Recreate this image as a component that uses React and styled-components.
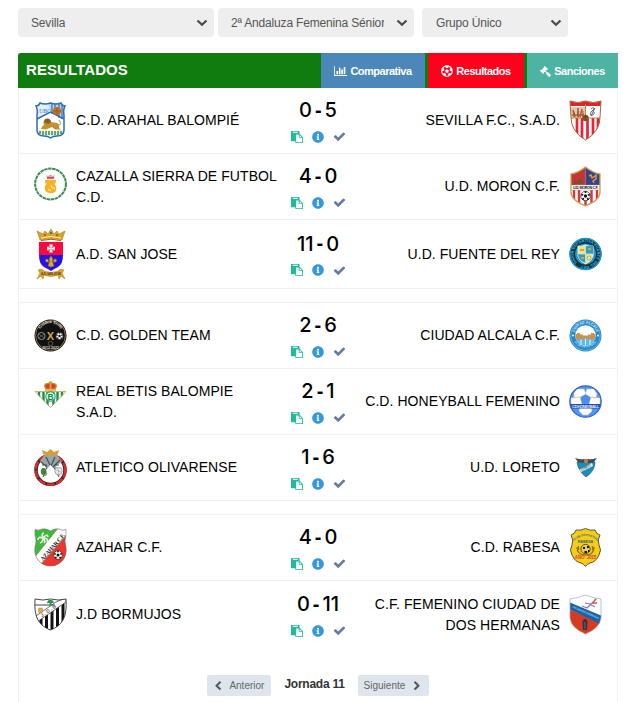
import styled, { createGlobalStyle, css } from "styled-components";
import { FaFutbol, FaGavel, FaInfoCircle } from "react-icons/fa";

const Ball = ({ x, y, r }) => (
  <g>
    <circle cx={x} cy={y} r={r} fill="#fff" stroke="#222" strokeWidth="0.7" />
    <circle cx={x} cy={y} r={r * 0.35} fill="#111" />
    <path
      d={`M${x - r * 0.9} ${y - r * 0.3}l${r * 0.4} ${r * 0.1}M${x + r * 0.9} ${y - r * 0.3}l${-r * 0.4} ${r * 0.1}M${x - r * 0.6} ${y + r * 0.8}l${r * 0.2} ${-r * 0.4}M${x + r * 0.6} ${y + r * 0.8}l${-r * 0.2} ${-r * 0.4}M${x} ${y - r}v${r * 0.35}`}
      stroke="#111"
      strokeWidth={r * 0.35}
    />
  </g>
);

const Arahal = () => (
  <svg width="31" height="37" viewBox="0 0 31 37">
    <clipPath id="arahal">
      <path d="M1 4Q4 4 5 1Q10 3 15.500 1Q21 3 26 1Q27 4 30 4Q28 8 29 13V28Q29 34 22 34Q18 34 15.500 36Q13 34 9 34Q2 34 2 28V13Q3 8 1 4Z" />
    </clipPath>
    <g clipPath="url(#arahal)">
      <rect width="31" height="37" fill="#fff" />
      <path d="M1 0H15V10L1 18Z" fill="#e3eefa" />
      <path d="M13 0H31V18L15 10Z" fill="#b9d3ec" />
      <path d="M17 0v12M20 0v13M27 0v17M24 0v16" stroke="#3b77b8" strokeWidth="1.300" />
      <path d="M2 17L15.500 10L29 17" fill="none" stroke="#2e6db0" strokeWidth="1.500" />
      <circle cx="22" cy="9" r="4" fill="#c8701e" />
      <path d="M18 9h8M22 5v8" stroke="#8f4a12" strokeWidth="0.500" />
      <text x="4" y="11" fontSize="6" fontStyle="italic" fontFamily="Liberation Serif" fill="#3b77b8">UBC</text>
      <path d="M6 27Q7 24 9 23Q7 19 11 17Q15 16 16 20L22 21Q25 22 24 26L26 27.500H20L17 25L11 27.500Z" fill="#c19234" />
      <path d="M10 17Q15 15 16 20L13 22L9 20Z" fill="#84621f" />
      <path d="M24 23Q27 22 24 18" fill="none" stroke="#c19234" />
      <rect y="28" width="31" height="7" fill="#e9f3e9" />
      <path d="M5 29v3M8 29v4M11 29v4M14 29v4M17 29v4M20 29v4M23 29v4M26 29v3" stroke="#3e8c46" strokeWidth="1.500" />
    </g>
    <path d="M1 4Q4 4 5 1Q10 3 15.500 1Q21 3 26 1Q27 4 30 4Q28 8 29 13V28Q29 34 22 34Q18 34 15.500 36Q13 34 9 34Q2 34 2 28V13Q3 8 1 4Z" fill="none" stroke="#2e6db0" strokeWidth="1.500" />
  </svg>
);

const Cazalla = () => (
  <svg width="33" height="34" viewBox="0 0 33 34">
    <circle cx="16.500" cy="17" r="15.400" fill="#fff" stroke="#3f8a4d" strokeWidth="2" strokeDasharray="3.500 0.600" />
    <circle cx="16.500" cy="17" r="13.500" fill="none" stroke="#dcebdc" strokeWidth="0.500" />
    <path d="M12 8L14 9L16.500 7.500L19 9L21 8L20 11H13Z" fill="#e9a49c" />
    <path d="M13 11H20" stroke="#c2304b" strokeWidth="1.500" />
    <path d="M11.500 13H21.500Q23 15 20.500 17Q23 20 22 24Q19 27 16 26Q12 26 11 23Q10 19 12.500 17Q10 15 11.500 13Z" fill="#f7b125" />
    <path d="M17 18l1 3h3M14 23h3" fill="none" stroke="#fff0bb" />
  </svg>
);

const SanJose = () => (
  <svg width="30" height="52" viewBox="0 0 30 52">
    <path d="M4 12L1 3L7 6L9 3L12 6L15 1L18 6L21 3L23 6L29 3L26 12Q15 9 4 12Z" fill="#d9a520" stroke="#937016" strokeWidth="0.500" />
    <path d="M5 10Q15 7 25 10" fill="none" stroke="#fff3b1" />
    <path d="M5 12.500Q15 10 25 12.500" fill="none" stroke="#ba5030" />
    <circle cx="9" cy="7" r="0.900" fill="#cf2b26" />
    <circle cx="15" cy="5" r="1" fill="#2c60b8" />
    <circle cx="21" cy="7" r="0.900" fill="#cf2b26" />
    <path d="M3 14H27V27H3Z" fill="#fb0b3d" />
    <path d="M3 27H27Q27 36 22 39Q18 41 15 43Q12 41 8 39Q3 36 3 27Z" fill="#2512e4" />
    <path d="M15 20.500L13 16.500H17ZM15 20.500L17 24.500H13ZM15 20.500L11 22.500V18.500ZM15 20.500L19 18.500V22.500Z" fill="#fff" />
    <path d="M12.500 18l5 5M17.500 18l-5 5" stroke="#fff" strokeWidth="0.700" />
    <path d="M15 28Q18 31 16 34H20Q22 31 18 31L17 35L18 38L15 39L12 38L13 35L12 31Q8 31 10 34H14Q12 31 15 28Z" fill="#d8ac31" stroke="#8c621c" strokeWidth="0.500" />
    <path d="M2 42Q6 40 8 43Q15 46 22 43Q24 40 28 42L26 45L29 51L25 48L23 51L22 47Q15 50 8 47L7 51L5 48L1 51L4 45Z" fill="#dda12b" stroke="#ad7513" strokeWidth="0.500" />
    <text x="15" y="47" textAnchor="middle" fontSize="3" textLength="20" fontWeight="bold" fontFamily="Liberation Sans" fill="#5b4417">A.D. SAN JOSE</text>
  </svg>
);

const Golden = () => (
  <svg width="33" height="33" viewBox="0 0 33 33">
    <circle cx="16.500" cy="16.500" r="16" fill="#111" />
    <circle cx="16.500" cy="16.500" r="14.900" fill="none" stroke="#a47c43" strokeWidth="0.900" />
    <path id="goldenTop" d="M6 10A12.300 12.300 0 0 1 27 10" fill="none" />
    <text fontSize="4.300" fontWeight="bold" fontFamily="Liberation Serif" fill="#eee"><textPath href="#goldenTop" startOffset="50%" textAnchor="middle">Golden Team</textPath></text>
    <text x="16.500" y="20.500" textAnchor="middle" fontSize="11" fontWeight="bold" fontFamily="Liberation Sans" fill="#d3a15e">X</text>
    <circle cx="7.500" cy="17" r="3.600" fill="none" stroke="#a9a9a9" strokeWidth="0.800" />
    <path d="M5 15l5 4M10 15l-5 4" stroke="#888" strokeWidth="0.600" />
    <Ball x={25.500} y={17} r={3.600} />
    <circle cx="16.500" cy="24.500" r="2.200" fill="none" stroke="#84714e" strokeWidth="0.700" />
    <text x="16.500" y="30" textAnchor="middle" fontSize="3.500" fontWeight="bold" fontFamily="Liberation Sans" fill="#ddd">2012-2021</text>
  </svg>
);

const Betis = () => (
  <svg width="33" height="41" viewBox="0 0 33 41">
    <path d="M12 8Q9 4 12.500 2.500Q15 3 16.500 0.500Q18 3 20.500 2.500Q24 4 21 8Z" fill="#dc3e32" stroke="#c99a30" strokeWidth="1.200" />
    <path d="M16.500 0V8M11 9H22" stroke="#d9aa31" strokeWidth="1.700" />
    <clipPath id="betis"><path d="M1 11H32L16.500 27Z" /></clipPath>
    <g clipPath="url(#betis)">
      <path d="M0 10H33V28H0Z" fill="#fff" />
      <path d="M5 10v18M9.500 10v18M13.500 10v18M19.500 10v18M23.500 10v18M28 10v18" stroke="#109150" strokeWidth="2.400" />
    </g>
    <path d="M1 10.500H32L16.500 26.500Z" fill="none" stroke="#c6ad4d" strokeWidth="0.900" />
    <circle cx="16.500" cy="15.500" r="4.700" fill="#e9f7ef" stroke="#109150" />
    <text x="16.500" y="18.500" textAnchor="middle" fontSize="8.500" fontWeight="bold" fontFamily="Liberation Sans" fill="#109150">B</text>
  </svg>
);

const Olivarense = () => (
  <svg width="33" height="37" viewBox="0 0 33 37">
    <circle cx="16.500" cy="21" r="14.500" fill="#fff" stroke="#2f2528" strokeWidth="3.500" />
    <circle cx="16.500" cy="21" r="14.900" fill="none" stroke="#d92d2b" strokeWidth="2.600" strokeDasharray="8 1.500" />
    <path d="M6 12L12 4H22L28 13L22 17L26 27L22 25L17 18L12 27L10 27L12 17Z" fill="#9ba4a5" />
    <path d="M7 13l6 5M26 11l-8 8M12 8l4 8M21 8l-4 9M8 16l5 0M25 16h-5" stroke="#3c5354" strokeWidth="1.200" />
    <path d="M13 19L9 28M20 19L25 28" stroke="#444" />
    <path d="M12 21L16.500 16L22 22L18 28L16 32Z" fill="#fff" />
    <path d="M9 5L8 1L13 3L16.500 0L20 3L25 1L24 5Q17 8 9 5Z" fill="#d99d35" />
    <ellipse cx="9.500" cy="22.500" rx="2.700" ry="3.500" fill="#41833b" />
    <circle cx="24.500" cy="22" r="3.700" fill="#eee" stroke="#888" strokeWidth="0.700" />
    <path d="M22 21l5 2M24 19l1 6" stroke="#888" strokeWidth="0.500" />
  </svg>
);

const Azahar = () => (
  <svg width="33" height="39" viewBox="0 0 33 39">
    <clipPath id="azahar"><path d="M1 1.500Q5 3 8 1Q12 0 16.500 3Q21 0 25 1Q28 3 32 1.500V7Q30 13 32 19Q33 27 29 32Q24 38 16.500 38Q9 38 4 32Q0 27 1 19Q3 13 1 7Z" /></clipPath>
    <g clipPath="url(#azahar)">
      <rect width="33" height="39" fill="#3eb939" />
      <path d="M33 7V39H8L5 36Z" fill="#ee342d" />
      <path d="M0 30L25 -1L36 3L7 36Z" fill="#fff" stroke="#8a7963" strokeWidth="0.700" />
      <text x="-17" y="2.200" textAnchor="start" transform="translate(18.500 19) rotate(-49)" textLength="34" fontSize="6" fontWeight="bold" fontFamily="Liberation Serif" fill="#222">AZAHAR C.F.</text>
      <path d="M9 10Q7 5 10 5M9 10Q13 5 14 9M9 10Q15 10 13 14M9 10Q4 8 4 12M9 10Q9 14 6 15M9 10Q12 13 10 15" fill="none" stroke="#e6f0df" strokeWidth="1.700" />
      <Ball x={24} y={27} r={4.300} />
    </g>
    <path d="M1 1.500Q5 3 8 1Q12 0 16.500 3Q21 0 25 1Q28 3 32 1.500V7Q30 13 32 19Q33 27 29 32Q24 38 16.500 38Q9 38 4 32Q0 27 1 19Q3 13 1 7Z" fill="none" stroke="#777" strokeWidth="0.600" />
  </svg>
);

const Bormujos = () => (
  <svg width="33" height="33" viewBox="0 0 33 33">
    <clipPath id="bormujos"><path d="M1 1Q9 3 16.500 1Q24 3 32 1Q33 15 29 22Q25 29 16.500 32Q8 29 4 22Q0 15 1 1Z" /></clipPath>
    <g clipPath="url(#bormujos)">
      <rect width="33" height="33" fill="#fff" />
      <path d="M7 20v12M12.500 17v16M18 12v21M23.500 8v25M29 5v28" stroke="#111" strokeWidth="3" />
      <path d="M3 24L32 4V0L22 4L2 18Z" fill="#fff" stroke="#333" strokeWidth="0.700" />
      <path d="M0 7H21" stroke="#444" />
      <text x="0" y="0" transform="translate(8 19.500) rotate(-35)" fontSize="5" fontWeight="bold" fontFamily="Liberation Sans" textLength="18" fill="#666">J.D.B</text>
      <rect x="4.500" y="10" width="4" height="4.500" rx="1" fill="#dfac4a" stroke="#987434" strokeWidth="0.500" />
      <path d="M13 5Q14 1 17 2Q20 2 19.500 5H17.500V8H15.500V5Z" fill="#2d954d" />
    </g>
    <path d="M1 1Q9 3 16.500 1Q24 3 32 1Q33 15 29 22Q25 29 16.500 32Q8 29 4 22Q0 15 1 1Z" fill="none" stroke="#333" strokeWidth="0.900" />
  </svg>
);

const Sevilla = () => (
  <svg width="33" height="41" viewBox="0 0 33 41">
    <clipPath id="sevilla"><path d="M1 1Q9 4 16.500 1Q24 4 32 1L31 17Q31 24 28 29Q24 36 16.500 40Q9 36 5 29Q2 24 2 17Z" /></clipPath>
    <g clipPath="url(#sevilla)">
      <rect width="33" height="41" fill="#fff" />
      <path d="M0 0H33V6H0Z" fill="#e3232b" />
      <path d="M2 7H16V18H2Z" fill="#e7c8a5" />
      <path d="M4 10l2 7M9 8v9M13 9l-2 8M3 15h12" stroke="#b7564a" strokeWidth="1.600" />
      <path d="M5 12v5M9 11v6M14 11v6" stroke="#805f27" />
      <path d="M8 18V41M13 18V41M18.500 18V41M24 18V41M29 18V41" stroke="#ed2036" strokeWidth="2.700" />
      <path d="M1 18H32M16.500 4V18" stroke="#b18544" />
      <path d="M22 9Q25 6 25 9L22 12Q20 16 24 15Q27 13 24 11M26 8L22 16" fill="none" stroke="#444" strokeWidth="0.800" />
    </g>
    <circle cx="16.500" cy="18" r="3.200" fill="#8e5428" />
    <path d="M14 17h5M16.500 15v6" stroke="#4f351e" strokeWidth="0.500" />
    <path d="M1 1Q9 4 16.500 1Q24 4 32 1L31 17Q31 24 28 29Q24 36 16.500 40Q9 36 5 29Q2 24 2 17Z" fill="none" stroke="#9a7037" />
  </svg>
);

const Moron = () => (
  <svg width="31" height="41" viewBox="0 0 31 41">
    <clipPath id="moron"><path d="M1 8Q8 7 15.500 1Q23 7 30 8V25Q31 34 15.500 40Q0 34 1 25Z" /></clipPath>
    <g clipPath="url(#moron)">
      <path d="M0 0H15.500V19H0Z" fill="#c53633" />
      <path d="M15.500 0H31V19H15.500Z" fill="#34418c" />
      <path d="M0 19H31V41H0Z" fill="#fff" />
      <path d="M4 24V40M9 24V40M21.500 24V40M27 24V40M15.500 32V40" stroke="#d9393c" strokeWidth="2.500" />
      <path d="M4 18V14L7 16L9 13L13 15V18Z" fill="#804d31" />
      <path d="M19 10L21 9L22 12L24 11L26 9V13L23 15L24 17" fill="none" stroke="#df973b" strokeWidth="1.500" />
      <rect x="1" y="19" width="29" height="5" fill="#fff" stroke="#9b9286" strokeWidth="0.400" />
    </g>
    <text x="15.500" y="23" textAnchor="middle" fontSize="3.700" textLength="25" fontWeight="bold" fontFamily="Liberation Sans" fill="#111">U.D. MORON C.F.</text>
    <Ball x={15.500} y={30} r={4.700} />
    <path d="M1 8Q8 7 15.500 1Q23 7 30 8V25Q31 34 15.500 40Q0 34 1 25Z" fill="none" stroke="#cba35b" strokeWidth="1.300" />
  </svg>
);

const Fuente = () => (
  <svg width="33" height="34" viewBox="0 0 33 34">
    <circle cx="16.500" cy="17" r="16" fill="#12303f" />
    <circle cx="16.500" cy="17" r="15.500" fill="none" stroke="#1c9ac7" strokeWidth="1.300" />
    <circle cx="16.500" cy="17" r="10.500" fill="#2399c7" />
    <path id="fuenteRing" d="M8 25.500A12 12 0 1 1 25 25.500A12 12 0 0 1 8 25.500" fill="none" />
    <text fontSize="3.700" fontWeight="bold" fontFamily="Liberation Sans" fill="#3cc3ee"><textPath href="#fuenteRing" textLength="70">UNION DEPORTIVA FUENTE DEL REY</textPath></text>
    <path d="M9 9Q13 10 16.500 8Q20 10 24 9V19Q23 24 16.500 27Q10 24 9 19Z" fill="#f3e184" stroke="#e5efed" />
    <path d="M16.500 9H24V17H16.500ZM9 17H16.500V26Q10 24 9 18Z" fill="#309dc7" />
    <path d="M11 13h4M19 12h3M12 21h3" stroke="#d9a044" strokeWidth="2" />
    <circle cx="20" cy="21" r="2" fill="#eaf0a0" stroke="#776" strokeWidth="0.500" />
    <path d="M9 17H24M16.500 9V26" stroke="#dce5cd" strokeWidth="0.700" />
  </svg>
);

const Alcala = () => (
  <svg width="33" height="33" viewBox="0 0 33 33">
    <circle cx="16.500" cy="16.500" r="16" fill="#2689cb" />
    <circle cx="16.500" cy="16.500" r="14.900" fill="none" stroke="#8bc8ed" strokeWidth="0.600" />
    <path id="alcalaTop" d="M5.200 16A11.300 11.300 0 0 1 27.800 16" fill="none" />
    <path id="alcalaLow" d="M3.300 18A13.500 13.500 0 0 0 29.700 18" fill="none" />
    <text fontSize="3.600" fontWeight="bold" fontFamily="Liberation Sans" fill="#d8effc"><textPath href="#alcalaTop" startOffset="50%" textAnchor="middle">CIUDAD ALCALA</textPath></text>
    <text fontSize="3" fontWeight="bold" fontFamily="Liberation Sans" fill="#b8dff7"><textPath href="#alcalaLow" startOffset="50%" textAnchor="middle">CLUB DE FUTBOL</textPath></text>
    <circle cx="16.500" cy="16.500" r="10.300" fill="#fff" />
    <path d="M7 19H26Q24 26.500 16.500 26.500Q9 26.500 7 19Z" fill="#5cbbed" />
    <path d="M12 20v6M16.500 20v6.500M21 20v6" stroke="#eaf8ff" />
    <path d="M6.500 20.500V15H8V14H11V15.500H14V16.500H19V15.500H22V14H25V15H26.500V20.500H19Q16.500 18 14 20.500Z" fill="#c69450" />
    <circle cx="4" cy="16.500" r="1" fill="#fff" />
    <circle cx="29" cy="16.500" r="1" fill="#fff" />
  </svg>
);

const Honeyball = () => (
  <svg width="33" height="33" viewBox="0 0 33 33">
    <clipPath id="honey"><circle cx="16.500" cy="16.500" r="15.500" /></clipPath>
    <g clipPath="url(#honey)">
      <rect width="33" height="33" fill="#4b97f4" />
      <path d="M8 4L15 4L17 9L12 12L5 13L5 8ZM18 4L25 4L28 9L27 13L21 12L16 9ZM2 13L11 12L13 19L8 22L2 20ZM31 13L22 12L20 19L25 22L31 20ZM11 22H22L23 26L19 30H14L10 26Z" fill="#fff" stroke="#d7c7a0" strokeWidth="0.600" />
      <path d="M12 12L16.500 9.500L21 12L20 18H13Z" fill="#4a8fe8" />
      <path d="M1 19H32V23.500H1Z" fill="#294eb0" />
    </g>
    <circle cx="16.500" cy="16.500" r="15.700" fill="none" stroke="#2d5fc9" strokeWidth="1.200" />
    <text x="16.500" y="22.700" textAnchor="middle" fontSize="4.300" textLength="27" fontWeight="bold" fontFamily="Liberation Sans" fill="#d9e8ff">CD.HONEYBALL</text>
  </svg>
);

const Loreto = () => (
  <svg width="22" height="19" viewBox="0 0 22 19">
    <path d="M2 4H20Q20 13 11 19Q3 13 2 4Z" fill="#168fb9" stroke="#315664" strokeWidth="0.700" />
    <path d="M0 0Q6 2 9 1H13Q16 2 22 0L19 4L13 5H9L3 4Z" fill="#414955" />
    <circle cx="11" cy="3" r="2.200" fill="#ba8344" />
    <path d="M4 12L17 5L18 8L6 14Z" fill="#edf4f5" />
    <text x="0" y="0" transform="translate(6.500 13) rotate(-28)" fontSize="3" textLength="11" fontWeight="bold" fontFamily="Liberation Sans" fill="#556">LORETO</text>
  </svg>
);

const Rabesa = () => (
  <svg width="31" height="39" viewBox="0 0 31 39">
    <path d="M6 2Q11 3 15.500 0.500Q20 3 25 2Q26 6 30 7Q27 12 29 17Q32 22 29 27Q26 34 20 35Q17 36 15.500 38.500Q14 36 11 35Q5 34 2 27Q-1 22 2 17Q4 12 1 7Q5 6 6 2Z" fill="#f7cb16" stroke="#5c573c" />
    <path id="rabesaTop" d="M3.500 13Q15.500 3 27.500 13" fill="none" />
    <text fontSize="3" fontWeight="bold" fontFamily="Liberation Sans" fill="#2b6c79"><textPath href="#rabesaTop" startOffset="50%" textAnchor="middle">CLUB DEPORTIVO</textPath></text>
    <text x="15.500" y="15" textAnchor="middle" fontSize="3.700" fontWeight="bold" fontFamily="Liberation Sans" fill="#2b6c79">RABESA</text>
    <path d="M7 19Q7 27 15.500 27Q24 27 24 19M8.500 18v4M22.500 18v4" fill="none" stroke="#8e761a" strokeWidth="1.300" />
    <circle cx="15.500" cy="21" r="4.600" fill="#f0cf45" stroke="#222" strokeWidth="0.700" />
    <path d="M13 19h2v2h-2zM17 18h2v2h-2zM14.500 23h2.500v2h-2.500zM18 22h1.500v2H18z" fill="#111" />
    <text x="9.500" y="30.500" textAnchor="middle" fontSize="4.500" fontWeight="bold" fontStyle="italic" fontFamily="Liberation Sans" fill="#cf4632">AÑO</text>
    <text x="21.500" y="30.500" textAnchor="middle" fontSize="4.500" fontWeight="bold" fontStyle="italic" textLength="9" fontFamily="Liberation Sans" fill="#cf4632">2015</text>
  </svg>
);

const DosHermanas = () => (
  <svg width="33" height="41" viewBox="0 0 33 41">
    <clipPath id="hermanas"><path d="M1 5Q9 4 16.500 1Q24 4 32 5V24Q31 34 16.500 40Q2 34 1 24Z" /></clipPath>
    <g clipPath="url(#hermanas)">
      <rect width="33" height="41" fill="#fff" />
      <path d="M0 15L33 30V41H0Z" fill="#d83a1e" />
      <path d="M0 8L33 22V31L0 15Z" fill="#1763a6" />
      <text x="0" y="0" transform="translate(3 13.500) rotate(24)" fontSize="2.800" textLength="29" fontFamily="Liberation Sans" fill="#b3d4ee">C.F.F CIUDAD DOS HERMANAS</text>
      <path d="M25 7L22 10L16 9M22 10L18 14L13 12M22 11L26 13" fill="none" stroke="#8b7cc0" strokeWidth="1.200" />
      <path d="M26 6L24 9L28 9" fill="none" stroke="#e34c46" strokeWidth="1.300" />
      <circle cx="26.500" cy="5.500" r="1.100" fill="#e34c46" />
      <path d="M13.500 27Q16 23 18.500 27L18 36H14Z" fill="#2b3352" />
      <path d="M16 28v7" stroke="#6d6680" />
    </g>
    <path d="M1 5Q9 4 16.500 1Q24 4 32 5V24Q31 34 16.500 40Q2 34 1 24Z" fill="none" stroke="#9faab1" strokeWidth="0.700" />
  </svg>
);

const matches = [
  [
    { home: "C.D. ARAHAL BALOMPIÉ", HomeCrest: Arahal, score: [0, 5], away: "SEVILLA F.C., S.A.D.", AwayCrest: Sevilla },
    { home: "CAZALLA SIERRA DE FUTBOL\nC.D.", HomeCrest: Cazalla, lift: 6, score: [4, 0], away: "U.D. MORON C.F.", AwayCrest: Moron },
    { home: "A.D. SAN JOSE", HomeCrest: SanJose, score: [11, 0], away: "U.D. FUENTE DEL REY", AwayCrest: Fuente, tall: true },
  ],
  [
    { home: "C.D. GOLDEN TEAM", HomeCrest: Golden, score: [2, 6], away: "CIUDAD ALCALA C.F.", AwayCrest: Alcala },
    { home: "REAL BETIS BALOMPIE\nS.A.D.", HomeCrest: Betis, score: [2, 1], away: "C.D. HONEYBALL FEMENINO", AwayCrest: Honeyball },
    { home: "ATLETICO OLIVARENSE", HomeCrest: Olivarense, score: [1, 6], away: "U.D. LORETO", AwayCrest: Loreto },
  ],
  [
    { home: "AZAHAR C.F.", HomeCrest: Azahar, score: [4, 0], away: "C.D. RABESA", AwayCrest: Rabesa },
    { home: "J.D BORMUJOS", HomeCrest: Bormujos, score: [0, 11], away: "C.F. FEMENINO CIUDAD DE\nDOS HERMANAS", AwayCrest: DosHermanas },
  ],
];

const Arrow = () => (
  <svg width="12" height="8" viewBox="0 0 12 8">
    <path d="M1.500 1.500L6 5.700L10.500 1.500" fill="none" stroke="#4a4a4a" strokeWidth="2.200" />
  </svg>
);

const BarChart = () => (
  <svg width="13" height="12" viewBox="0 0 2048 1792" fill="currentColor">
    <path d="M640 896v512h-256v-512h256zm384-512v1024h-256v-1024h256zm1024 1152v128h-2048v-1536h128v1408h1920zm-640-896v768h-256v-768h256zm384-384v1152h-256v-1152h256z" />
  </svg>
);

const Paste = () => (
  <svg width="12" height="12" viewBox="0 0 1792 1792" fill="#24b99a">
    <path d="M768 1664h896v-640h-416q-40 0-68-28t-28-68v-416h-384v1152zm256-1440v-64q0-13-9.500-22.500t-22.500-9.500h-704q-13 0-22.500 9.500t-9.500 22.500v64q0 13 9.500 22.500t22.500 9.500h704q13 0 22.500-9.500t9.500-22.500zm256 672h299l-299-299v299zm512 128v672q0 40-28 68t-68 28h-960q-40 0-68-28t-28-68v-160h-544q-40 0-68-28t-28-68v-1344q0-40 28-68t68-28h1088q40 0 68 28t28 68v328q21 13 36 28l408 408q28 28 48 76t20 88z" />
  </svg>
);

const Check = () => (
  <svg width="13" height="13" viewBox="0 0 1792 1792" fill="#667ba3">
    <path d="M1671 566q0 40-28 68l-724 724-136 136q-28 28-68 28t-68-28l-136-136-362-362q-28-28-28-68t28-68l136-136q28-28 68-28t68 28l294 295 656-657q28-28 68-28t68 28l136 136q28 28 28 68z" />
  </svg>
);

const Chevron = ({ className }) => (
  <svg className={className} width="10" height="10" viewBox="0 0 1792 1792" fill="#555">
    <path d="M1427 301l-531 531 531 531q19 19 19 45t-19 45l-166 166q-19 19-45 19t-45-19l-742-742q-19-19-19-45t19-45l742-742q19-19 45-19t45 19l166 166q19 19 19 45t-19 45z" />
  </svg>
);

const App = () => {
  return (
    <Main>
      <GlobalStyle />
      <Filters>
        <Select $width={196}><span>Sevilla</span><Arrow /></Select>
        <Select $width={196}><span>2ª Andaluza Femenina Sénior</span><Arrow /></Select>
        <Select $width={146} $apart><span>Grupo Único</span><Arrow /></Select>
      </Filters>
      <Panel>
        <Header>
          <Title>RESULTADOS</Title>
          <Tabs>
            <Tab $width={104} $color="#4b87b9"><BarChart /><span>Comparativa</span></Tab>
            <Tab $width={96} $color="#ff001d"><FaFutbol size={12} /><span>Resultados</span></Tab>
            <Tab $width={91} $color="#4db3a2"><Gavel size={11} /><span>Sanciones</span></Tab>
          </Tabs>
        </Header>
        {matches.map((group, i) => (
          <Group key={i}>
            {group.map(({ home, HomeCrest, score, away, AwayCrest, tall, lift }) => (
              <Match key={home} $tall={tall}>
                <Team>
                  <Crest $lift={lift}><HomeCrest /></Crest>
                  <Name>{home}</Name>
                </Team>
                <Result>
                  <Score><span>{score[0]}</span><i>-</i><span>{score[1]}</span></Score>
                  <Actions>
                    <Paste />
                    <FaInfoCircle size={12} color="#3498db" />
                    <Check />
                  </Actions>
                </Result>
                <Team $away>
                  <Name>{away}</Name>
                  <Crest><AwayCrest /></Crest>
                </Team>
              </Match>
            ))}
          </Group>
        ))}
        <Pager>
          <PageButton $width={64}><Chevron /><span>Anterior</span></PageButton>
          <Current>Jornada 11</Current>
          <PageButton $width={71}><span>Siguiente</span><NextChevron /></PageButton>
        </Pager>
      </Panel>
    </Main>
  );
};

export default App;

const GlobalStyle = createGlobalStyle`
  body {
    margin: 0;
    background: #fff;
    overflow: hidden;
  }
  * {
    box-sizing: border-box;
  }
`;
const Main = styled.div`
  display: flex;
  flex-direction: column;
  height: 702px;
  padding: 8px 10px 0 18px;
  overflow: hidden;
  font-family: "Liberation Sans", Arial, sans-serif;
`;
const Filters = styled.div`
  display: flex;
  gap: 4px;
  margin-bottom: 16px;
`;
const Select = styled.div`
  display: flex;
  align-items: center;
  justify-content: space-between;
  width: ${(props) => props.$width}px;
  height: 29px;
  padding: 0 6px 0 13px;
  border-radius: 4px;
  background: #eee;
  color: #555;
  font-size: 12px;
  letter-spacing: -0.17px;
  span {
    max-width: 153px;
    overflow: hidden;
    white-space: nowrap;
  }
  svg {
    flex: none;
  }
  ${(props) =>
    props.$apart &&
    css`
      margin-left: 4px;
      padding-left: 14px;
    `}
`;
const Panel = styled.div`
  flex: 1;
  width: 600px;
  border: solid #eff0f3;
  border-width: 0 1px;
`;
const Header = styled.div`
  display: flex;
  justify-content: space-between;
  height: 35px;
  margin: 0 -1px;
  border-top-left-radius: 3px;
  background: #107c10;
`;
const Title = styled.h1`
  margin: 0;
  padding-left: 8px;
  color: #fff;
  font-size: 15px;
  letter-spacing: 0.08px;
  line-height: 34px;
`;
const Tabs = styled.div`
  display: flex;
  gap: 3px;
`;
const Tab = styled.div`
  display: flex;
  align-items: center;
  justify-content: center;
  gap: 3px;
  width: ${(props) => props.$width}px;
  padding-top: 1px;
  background: ${(props) => props.$color};
  color: #fff;
  font-size: 11px;
  font-weight: bold;
  letter-spacing: -0.5px;
`;
const Gavel = styled(FaGavel)`
  transform: scaleX(-1);
`;
const Group = styled.div`
  & + & {
    margin-top: 13px;
    border-top: 1px solid #eef1f5;
  }
  &:nth-last-child(2) > div:last-child {
    padding-top: 1px;
    border-bottom: 0;
  }
`;
const Match = styled.div`
  display: grid;
  grid-template-columns: 1fr 76px 1fr;
  align-items: center;
  height: ${(props) => (props.$tall ? 69 : 66)}px;
  padding: 0 15px;
  border-bottom: 1px solid #eef1f5;
`;
const Team = styled.div`
  display: flex;
  align-items: center;
  justify-content: ${(props) => (props.$away ? "flex-end" : "flex-start")};
  gap: 9px;
  text-align: ${(props) => (props.$away ? "right" : "left")};
`;
const Crest = styled.div`
  display: flex;
  flex: none;
  justify-content: center;
  width: 33px;
  margin-bottom: ${(props) => props.$lift || 0}px;
`;
const Name = styled.div`
  color: #000;
  font-size: 14px;
  letter-spacing: 0.07px;
  line-height: 20.5px;
  white-space: pre;
`;
const Result = styled.div`
  display: flex;
  flex-direction: column;
  align-items: center;
  padding-top: 4px;
`;
const Score = styled.div`
  display: flex;
  align-items: center;
  gap: 3px;
  height: 28px;
  color: #000;
  font-family: Inter, sans-serif;
  font-size: 20px;
  font-weight: 500;
  i {
    font-family: "Liberation Sans", Arial, sans-serif;
    font-style: normal;
    font-weight: bold;
  }
`;
const Actions = styled.div`
  display: flex;
  align-items: center;
  gap: 9px;
  height: 25px;
  padding-left: 1px;
`;
const Pager = styled.div`
  display: flex;
  justify-content: center;
  gap: 13px;
  padding-top: 28px;
`;
const PageButton = styled.div`
  display: flex;
  align-items: center;
  justify-content: space-between;
  width: ${(props) => props.$width}px;
  height: 21px;
  padding: 0 7px 0 6px;
  border-radius: 2px;
  background: #dfe5ed;
  color: #666;
  font-size: 10px;
`;
const NextChevron = styled(Chevron)`
  transform: scaleX(-1);
`;
const Current = styled.div`
  color: #333;
  font-size: 12px;
  font-weight: bold;
  letter-spacing: -0.25px;
  line-height: 18px;
`;
